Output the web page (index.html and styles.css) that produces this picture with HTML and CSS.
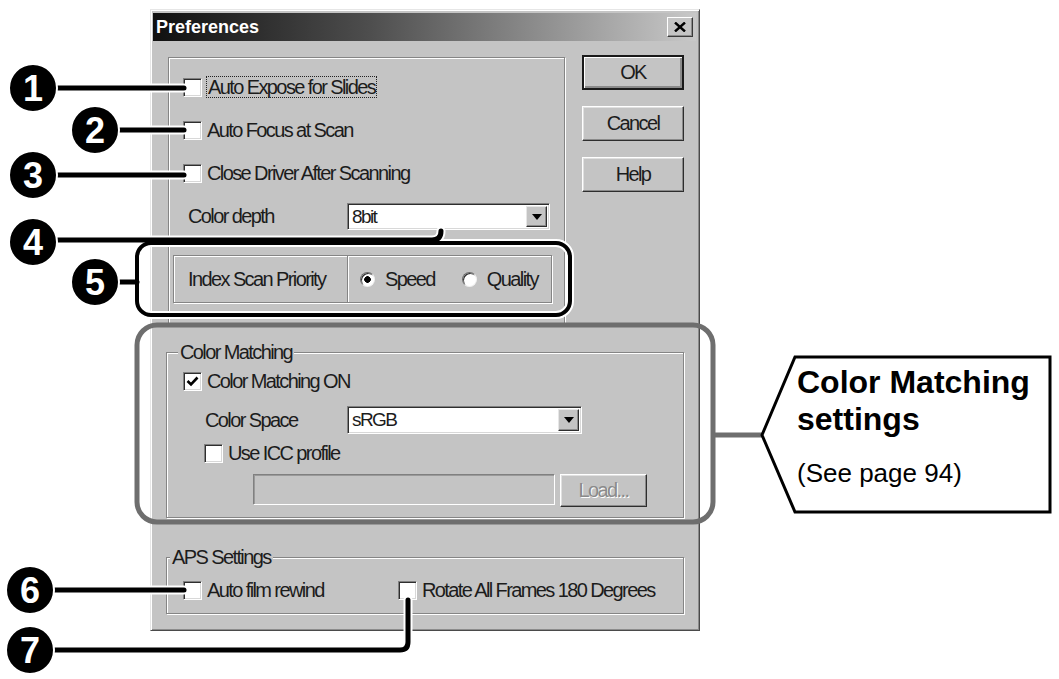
FILE: index.html
```html
<!DOCTYPE html>
<html lang="en">
<head>
    <meta charset="UTF-8">
    <meta name="viewport" content="width=device-width, initial-scale=1.0">
    <title>Preferences</title>
    <link rel="stylesheet" href="styles.css">
</head>
<body>
    <div class="page">
        <div class="dialog">
            <div class="title-bar">
                <span class="title">Preferences</span>
                <span class="close-btn">
                    <svg width="12" height="10" viewBox="0 0 12 10">
                        <path d="M1 0.5 L11 9.5 M11 0.5 L1 9.5" stroke="#000" stroke-width="2.4" fill="none"/>
                    </svg>
                </span>
            </div>
            <div class="dialog-body">
                <div class="top-row">
                    <div class="panel">
                        <div class="check-row">
                            <span class="checkbox"></span>
                            <span class="focus-text">Auto Expose for Slides</span>
                        </div>
                        <div class="check-row gap-row">
                            <span class="checkbox"></span>
                            <span>Auto Focus at Scan</span>
                        </div>
                        <div class="check-row gap-row">
                            <span class="checkbox"></span>
                            <span>Close Driver After Scanning</span>
                        </div>
                        <div class="field-row">
                            <span class="field-label">Color depth</span>
                            <div class="combo depth-combo">
                                <span class="combo-text">8bit</span>
                                <span class="combo-btn"><i class="arrow"></i></span>
                            </div>
                        </div>
                        <div class="priority-box">
                            <span class="priority-label">Index Scan Priority</span>
                            <div class="radio-box">
                                <span class="radio checked"></span>
                                <span>Speed</span>
                                <span class="radio second"></span>
                                <span>Quality</span>
                            </div>
                        </div>
                    </div>
                    <div class="buttons">
                        <div class="btn default">OK</div>
                        <div class="btn">Cancel</div>
                        <div class="btn">Help</div>
                    </div>
                </div>

                <div class="group color-group">
                    <span class="legend">Color Matching</span>
                    <div class="check-row on-row">
                        <span class="checkbox checked">
                            <svg width="13" height="11" viewBox="0 0 13 11">
                                <path d="M1.5 5 L5 8.5 L11.5 1.5" stroke="#000" stroke-width="2.6" fill="none"/>
                            </svg>
                        </span>
                        <span>Color Matching ON</span>
                    </div>
                    <div class="field-row space-row">
                        <span class="field-label space-label">Color Space</span>
                        <div class="combo space-combo">
                            <span class="combo-text">sRGB</span>
                            <span class="combo-btn"><i class="arrow"></i></span>
                        </div>
                    </div>
                    <div class="check-row icc-row">
                        <span class="checkbox"></span>
                        <span>Use ICC profile</span>
                    </div>
                    <div class="profile-row">
                        <div class="profile-field"></div>
                        <div class="btn load-btn">Load...</div>
                    </div>
                </div>

                <div class="group aps-group">
                    <span class="legend aps-legend">APS Settings</span>
                    <div class="aps-row">
                        <div class="check-row aps-first">
                            <span class="checkbox"></span>
                            <span>Auto film rewind</span>
                        </div>
                        <div class="check-row">
                            <span class="checkbox"></span>
                            <span>Rotate All Frames 180 Degrees</span>
                        </div>
                    </div>
                </div>
            </div>
        </div>

        <svg class="marks" width="1059" height="679" viewBox="0 0 1059 679">
            <rect x="137" y="325" width="576" height="197" rx="20" fill="none" stroke="#6e6e6e" stroke-width="5"/>
            <path d="M715 435 H762" stroke="#6e6e6e" stroke-width="5"/>
            <polygon points="762,435 795,357 1050,357 1050,512 795,512" fill="#fff" stroke="#000" stroke-width="3"/>

            <g fill="none" stroke-linecap="round" stroke-linejoin="round" stroke="#fff" stroke-width="9">
                <path d="M33 88 H184"/>
                <path d="M95 130 H184"/>
                <path d="M33 175 H184"/>
                <path d="M33 240 H432 Q441 240 441 231"/>
                <path d="M95 282 H137"/>
                <path d="M30 590 H184"/>
                <path d="M30 650 H400 Q408 650 408 642 V600"/>
            </g>
            <rect x="137" y="243" width="433" height="72" rx="14" fill="none" stroke="#fff" stroke-width="8"/>
            <g fill="none" stroke-linecap="round" stroke-linejoin="round" stroke="#000" stroke-width="5">
                <path d="M33 88 H184"/>
                <path d="M95 130 H184"/>
                <path d="M33 175 H184"/>
                <path d="M33 240 H432 Q441 240 441 231"/>
                <path d="M95 282 H137"/>
                <path d="M30 590 H184"/>
                <path d="M30 650 H400 Q408 650 408 642 V600"/>
            </g>
            <rect x="137" y="243" width="433" height="72" rx="14" fill="none" stroke="#000" stroke-width="4"/>

            <g fill="#000" stroke="#fff" stroke-width="2">
                <circle cx="33" cy="88" r="24"/>
                <circle cx="95" cy="130" r="24"/>
                <circle cx="33" cy="175" r="24"/>
                <circle cx="33" cy="242" r="24"/>
                <circle cx="95" cy="282" r="24"/>
                <circle cx="30" cy="590" r="24"/>
                <circle cx="30" cy="650" r="24"/>
            </g>
            <g class="num" fill="#fff" text-anchor="middle">
                <text x="33" y="101">1</text>
                <text x="95" y="143">2</text>
                <text x="33" y="188">3</text>
                <text x="33" y="255">4</text>
                <text x="95" y="295">5</text>
                <text x="30" y="603">6</text>
                <text x="30" y="663">7</text>
            </g>
        </svg>

        <div class="note">
            <div class="note-title">Color Matching<br>settings</div>
            <div class="note-ref">(See page 94)</div>
        </div>
    </div>
</body>
</html>
```

FILE: styles.css
```css
html,
body {
    margin: 0;
    padding: 0;
    background-color: #fff;
}

body {
    font-family: "Liberation Sans", Arial, sans-serif;
}

.page {
    position: relative;
    box-sizing: border-box;
    width: 1059px;
    height: 679px;
    padding: 9px 0 0 150px;
    overflow: hidden;
}

.dialog {
    box-sizing: border-box;
    width: 550px;
    height: 622px;
    padding: 3px 3px 0 2px;
    background-color: #c4c4c4;
    border: 1px solid;
    border-color: #e6e6e6 #4a4a4a #4a4a4a #e6e6e6;
    box-shadow: inset 1px 1px 0 #fff, inset -1px -1px 0 #8c8c8c;
    font-size: 20px;
    letter-spacing: -1.6px;
    color: #1c1c1c;
}

.title-bar {
    height: 28px;
    display: flex;
    justify-content: space-between;
    align-items: center;
    padding: 0 3px;
    background: linear-gradient(to right, #101010 0%, #4e4e4e 40%, #c8c8c8 100%);
}

.title {
    font-weight: bold;
    font-size: 18px;
    letter-spacing: 0;
    color: #fff;
}

.close-btn {
    box-sizing: border-box;
    width: 26px;
    height: 20px;
    display: flex;
    justify-content: center;
    align-items: center;
    background-color: #c4c4c4;
    border: 1px solid;
    border-color: #fff #3a3a3a #3a3a3a #fff;
    box-shadow: inset -1px -1px 0 #8c8c8c;
}

.dialog-body {
    padding: 16px 0 0 15px;
}

.top-row {
    display: flex;
    align-items: flex-start;
}

/* etched frames */
.panel,
.priority-box,
.group {
    box-sizing: border-box;
    border: 1px solid #858585;
    box-shadow: inset 1px 1px 0 #fff, 1px 1px 0 #fff;
}

.panel {
    width: 397px;
    height: 269px;
    padding: 18px 0 0 14px;
    display: flex;
    flex-direction: column;
}

.check-row {
    height: 22px;
    display: flex;
    align-items: center;
    gap: 5px;
    white-space: nowrap;
}

.gap-row {
    margin-top: 21px;
}

.checkbox {
    box-sizing: border-box;
    flex: none;
    width: 19px;
    height: 19px;
    display: flex;
    justify-content: center;
    align-items: center;
    background-color: #fff;
    border: 1px solid;
    border-color: #808080 #fff #fff #808080;
    box-shadow: inset 1px 1px 0 #2e2e2e, inset -1px -1px 0 #d8d8d8;
}

.focus-text {
    line-height: 20px;
    padding: 0 1px;
    outline: 1px dotted #222;
}

.field-row {
    height: 27px;
    margin-top: 19px;
    display: flex;
    align-items: center;
    white-space: nowrap;
}

.field-label {
    width: 159px;
    margin-left: 5px;
}

.combo {
    box-sizing: border-box;
    height: 27px;
    display: flex;
    justify-content: space-between;
    align-items: center;
    background-color: #fff;
    border: 1px solid;
    border-color: #808080 #fff #fff #808080;
    box-shadow: inset 1px 1px 0 #2e2e2e, inset -1px -1px 0 #d8d8d8;
    padding: 2px;
}

.depth-combo {
    width: 203px;
}

.combo-text {
    padding-left: 2px;
    font-size: 19px;
}

.combo-btn {
    box-sizing: border-box;
    width: 21px;
    height: 100%;
    display: flex;
    justify-content: center;
    align-items: center;
    background-color: #c4c4c4;
    border: 1px solid;
    border-color: #e6e6e6 #2e2e2e #2e2e2e #e6e6e6;
    box-shadow: inset -1px -1px 0 #8c8c8c;
}

.arrow {
    width: 0;
    height: 0;
    border-left: 5px solid transparent;
    border-right: 5px solid transparent;
    border-top: 6px solid #000;
}

.priority-box {
    width: 379px;
    height: 48px;
    margin: 25px 0 0 -10px;
    display: flex;
    align-items: center;
    white-space: nowrap;
}

.priority-label {
    width: 159px;
    margin-left: 14px;
}

.radio-box {
    align-self: stretch;
    flex: 1;
    display: flex;
    align-items: center;
    gap: 10px;
    padding-left: 12px;
    border-left: 1px solid #858585;
    box-shadow: inset 1px 0 0 #fff;
}

.radio {
    box-sizing: border-box;
    flex: none;
    width: 15px;
    height: 15px;
    border-radius: 50%;
    background-color: #fff;
    border: 1px solid;
    border-color: #6a6a6a #f0f0f0 #f0f0f0 #6a6a6a;
    box-shadow: inset 1px 1px 0 #2e2e2e;
}

.radio.checked {
    background: radial-gradient(circle, #000 0, #000 3px, #fff 3.6px);
}

.radio.second {
    margin-left: 17px;
}

.buttons {
    margin: -2px 0 0 17px;
    display: flex;
    flex-direction: column;
    gap: 16px;
}

.btn {
    box-sizing: border-box;
    width: 102px;
    height: 35px;
    display: flex;
    justify-content: center;
    align-items: center;
    background-color: #c4c4c4;
    border: 1px solid;
    border-color: #fff #2e2e2e #2e2e2e #fff;
    box-shadow: inset -1px -1px 0 #8a8a8a, inset 1px 1px 0 #e0e0e0;
}

.btn.default {
    border: 2px solid #1a1a1a;
    box-shadow: inset 1px 1px 0 #fff, inset -2px -2px 0 #8a8a8a;
}

.group {
    width: 518px;
    margin-left: -2px;
    display: flex;
    flex-direction: column;
}

.legend {
    align-self: flex-start;
    margin: -12px 0 0 11px;
    padding: 0 2px;
    line-height: 22px;
    background-color: #c4c4c4;
}

.aps-legend {
    margin-left: 3px;
}

.color-group {
    height: 166px;
    margin-top: 26px;
}

.on-row {
    margin: 7px 0 0 16px;
}

.space-row {
    margin-top: 14px;
    height: 28px;
}

.space-label {
    width: 142px;
    margin-left: 38px;
}

.space-combo {
    width: 235px;
    height: 28px;
}

.icc-row {
    margin: 8px 0 0 37px;
}

.profile-row {
    height: 33px;
    margin: 10px 0 0 86px;
    display: flex;
    gap: 5px;
}

.profile-field {
    box-sizing: border-box;
    width: 302px;
    height: 31px;
    border: 1px solid;
    border-color: #808080 #fff #fff #808080;
    box-shadow: inset 1px 1px 0 #9a9a9a;
}

.load-btn {
    width: 87px;
    height: 33px;
    color: #8a8a8a;
    text-shadow: 1px 1px 0 #fff;
}

.aps-group {
    height: 57px;
    margin-top: 39px;
}

.aps-row {
    margin: 11px 0 0 16px;
    display: flex;
}

.aps-first {
    width: 215px;
}

.marks {
    position: absolute;
    left: 0;
    top: 0;
}

.num {
    font-weight: bold;
    font-size: 36px;
}

.note {
    position: absolute;
    left: 797px;
    top: 364px;
    color: #000;
}

.note-title {
    font-weight: bold;
    font-size: 32px;
    line-height: 37px;
}

.note-ref {
    margin-top: 20px;
    font-size: 26px;
    line-height: 30px;
}
```
